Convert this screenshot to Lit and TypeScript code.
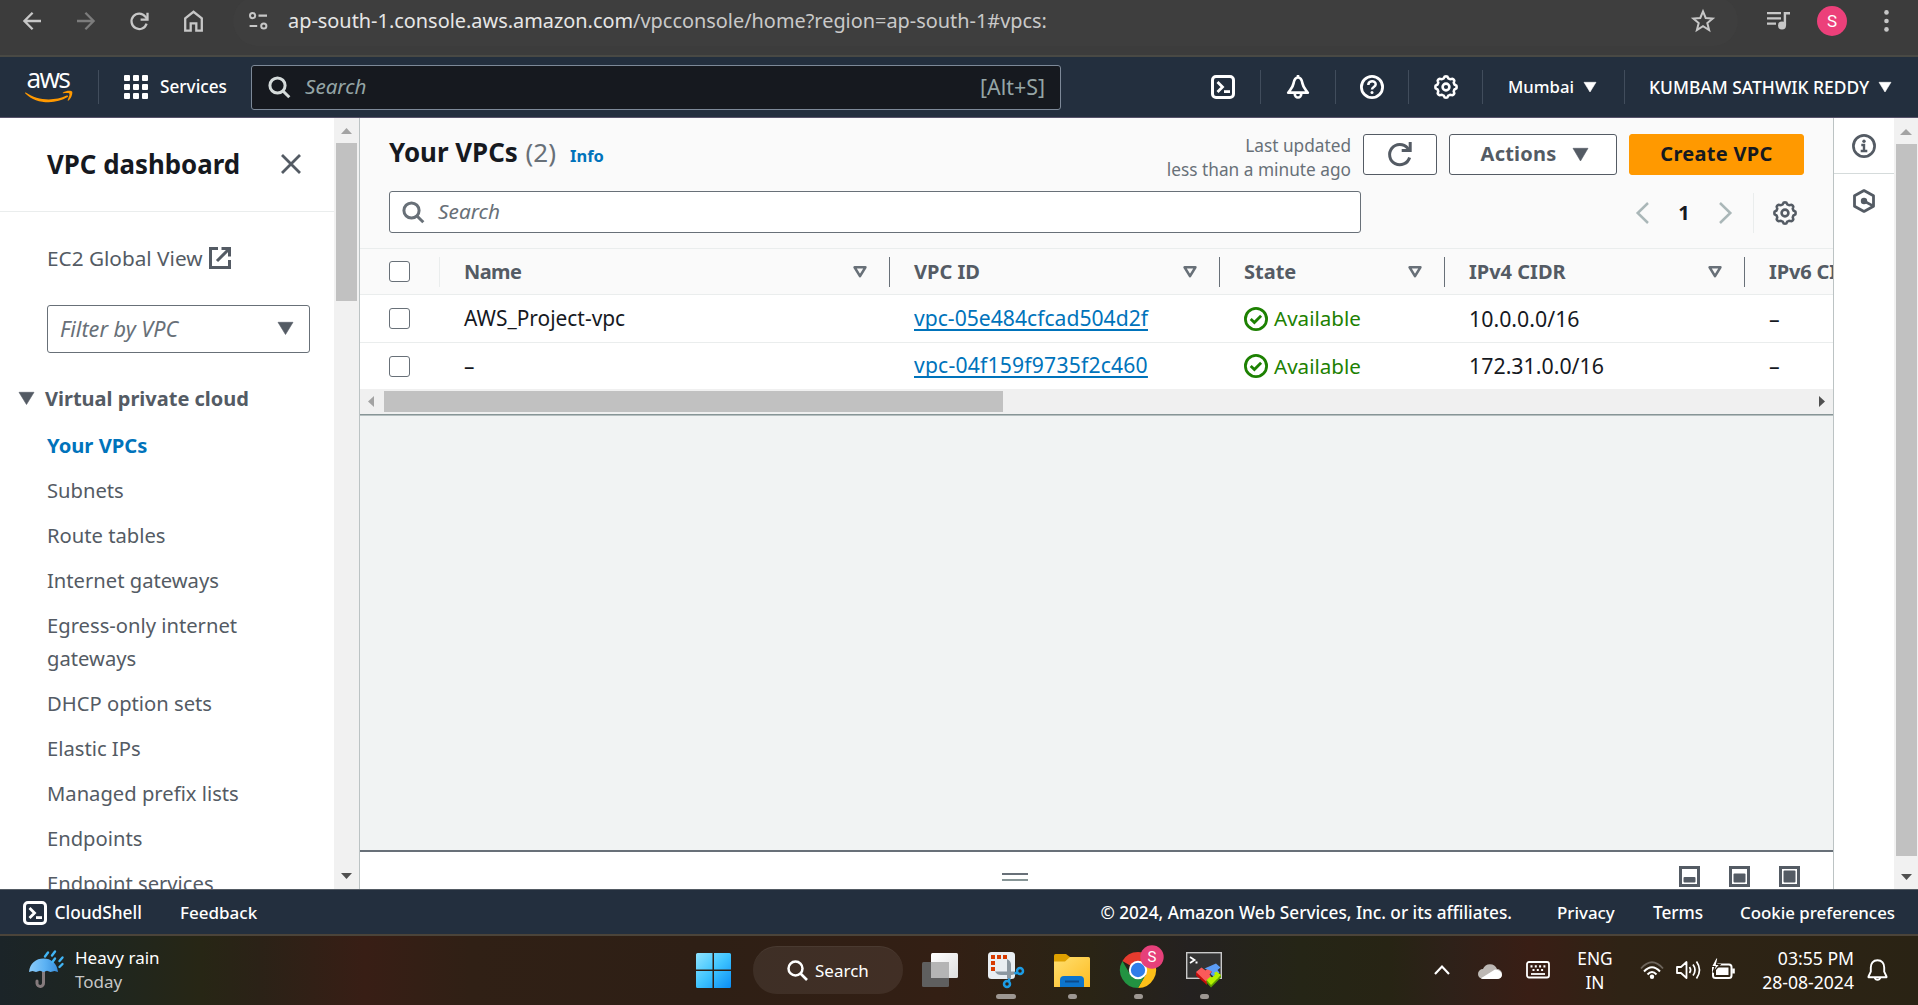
import { LitElement, html, css, svg } from "lit";
import { customElement } from "lit/decorators.js";

const gearPath = (() => {
  const pts: string[] = [];
  for (let i = 0; i < 96; i++) {
    const a = (i / 96) * Math.PI * 2;
    const r = 9.7 + 0.95 * Math.tanh(2.2 * Math.cos(8 * a));
    pts.push(`${(12 + r * Math.cos(a)).toFixed(2)} ${(12 + r * Math.sin(a)).toFixed(2)}`);
  }
  return `M${pts.join("L")}Z`;
})();

const icon = (cls: string, w: number, h: number, body: unknown) =>
  html`<svg class="ic ${cls}" width=${w} height=${h} viewBox="0 0 ${w} ${h}" aria-hidden="true">${body}</svg>`;

const gear = (cls = "") =>
  icon(`ln ${cls}`, 24, 24, svg`<path d=${gearPath} stroke-width="2.5"/><circle cx="12" cy="12" r="3.4" stroke-width="2.6"/>`);
const terminal = (cls = "") =>
  icon(`ln ${cls}`, 24, 24, svg`<rect x="1.5" y="1.5" width="21" height="21" rx="3.5" stroke-width="3"/><path d="M6.5 7l5 5-5 5" stroke-width="2.8"/><path d="M13 16.6h6" stroke-width="2.8"/>`);
const magnifier = (cls = "") =>
  icon(`ln ${cls}`, 23, 23, svg`<circle cx="9.5" cy="9.5" r="7.6" stroke-width="3"/><path d="M15 15l6.3 6.3" stroke-width="3"/>`);
const caret = (w: number, h: number, cls = "") =>
  icon(`fl ${cls}`, w, h, svg`<path d=${`M0 0.3H${w}L${w / 2} ${h}Z`} stroke="currentColor" stroke-width="0.6" stroke-linejoin="round"/>`);
const sortIcon = icon("ln sort", 16, 14, svg`<path d="M2.6 2.3h10.8L8 11.2Z" stroke-width="2.6" stroke-linejoin="round"/>`);

const shared = css`
  :host { display: block; box-sizing: border-box; }
  * { box-sizing: border-box; }
  .ic { display: block; flex: none; overflow: visible; }
  .ln { fill: none; stroke: currentColor; }
  .fl { fill: currentColor; }
  span { white-space: nowrap; }
`;

@customElement("browser-bar")
class BrowserBar extends LitElement {
  static styles = [shared, css`
    :host { height: 57px; background: #3c3c3c; border-bottom: 2px solid #494944; color: #c7c7c7; }
    .bar { display: flex; align-items: center; height: 42px; }
    .back { margin-left: 23px; }
    .fwd { margin-left: 36px; color: #7c7c7c; }
    .reload { margin-left: 35px; }
    .home { margin-left: 35px; }
    .omni { display: flex; align-items: center; width: 1505px; height: 50px; margin: 0 0 -4px 30px; padding: 0 0 1px 16px; background: #3e3e3e; border-radius: 25px; align-self: flex-end; }
    .url { margin-left: 20px; font-size: 19.9px; color: #c9c9c9; padding-bottom: 1px; }
    .host { color: #e6e6e6; }
    .star { margin-left: auto; margin-right: 23px; }
    .queue { margin-left: 29px; }
    .avatar { display: flex; align-items: center; justify-content: center; width: 30px; height: 30px; margin-left: 27px; border-radius: 50%; background: #ec407a; color: #fff; font: 17px Roboto, sans-serif; }
    .dots { margin-left: 37px; }
  `];
  render() {
    return html`<div class="bar">
      ${icon("ln back", 18, 18, svg`<path d="M18 9H1.8M9.6 .8L1.4 9l8.2 8.2" stroke-width="2.3"/>`)}
      ${icon("ln fwd", 18, 18, svg`<path d="M0 9h16.2M8.4 .8L16.6 9l-8.2 8.2" stroke-width="2.3"/>`)}
      ${icon("ln reload", 19, 19, svg`<path d="M16.6 11.6A7.7 7.7 0 1 1 15.3 4.6L17 6.8" stroke-width="2.3"/><path d="M17.5 .8v6.9h-6.9" stroke-width="2.3"/>`)}
      ${icon("ln home", 19, 22, svg`<path d="M1.2 8.4L9.5 1.8l8.3 6.6v12.3h-5.5v-7.3H6.7v7.3H1.2Z" stroke-width="2.3"/>`)}
      <div class="omni">
        ${icon("ln", 19, 18, svg`<circle cx="3.6" cy="3.6" r="2.6" stroke-width="2"/><path d="M9.5 3.6H18M.6 14h7.6" stroke-width="2.2"/><circle cx="14.8" cy="14" r="2.6" stroke-width="2"/>`)}
        <span class="url"><span class="host">ap-south-1.console.aws.amazon.com</span>/vpcconsole/home?region=ap-south-1#vpcs:</span>
        ${icon("ln star", 24, 23, svg`<path d="M12 2.4l2.7 6.6 7 .5-5.4 4.6 1.8 6.9L12 17.2 5.9 21l1.8-6.9L2.3 9.5l7-.5Z" stroke-width="2"/>`)}
      </div>
      ${icon("queue", 23, 20, svg`<path d="M0 2.2h14M0 7.4h14M0 12.6h9" stroke="currentColor" stroke-width="2.3"/><circle cx="15" cy="14.4" r="4" fill="currentColor"/><path d="M17.9 14.4V2.3H23" fill="none" stroke="currentColor" stroke-width="2.4"/>`)}
      <div class="avatar">S</div>
      ${icon("fl dots", 5, 22, svg`<circle cx="2.5" cy="2.4" r="2.3"/><circle cx="2.5" cy="11" r="2.3"/><circle cx="2.5" cy="19.4" r="2.3"/>`)}
    </div>`;
  }
}

@customElement("console-nav")
class ConsoleNav extends LitElement {
  static styles = [shared, css`
    :host { height: 61px; background: #232f3e; border-bottom: 1px solid #57536a; color: #fff; font-weight: 500; font-size: 17.2px; }
    .nav { display: flex; align-items: center; height: 60px; }
    .logo { display: flex; flex-direction: column; width: 48px; margin-left: 25px; height: 44px; }
    .aws { font: 500 26.5px/24px "Open Sans", "Noto Sans", sans-serif; letter-spacing: -1.7px; padding-left: 1.5px; margin-top: 1px; }
    .smile { margin-top: 1px; }
    .sep { width: 1px; height: 34px; background: #414d5c; flex: none; }
    .s1 { margin-left: 25px; }
    .grid { margin-left: 25px; }
    .services, .region, .user { padding-bottom: 1px; }
    .services { margin-left: 12px; width: 67px; }
    .search { display: flex; align-items: center; width: 810px; height: 45px; margin-left: 24px; padding: 0 15px 0 16px; background: #16191f; border: 1.5px solid #7d8998; border-radius: 3px; color: #95a5a6; font-weight: 400; }
    .mag { color: #d5dbdb; }
    .ph { font-size: 20.6px; font-style: italic; margin-left: 14px; padding-bottom: 2px; }
    .key { font-size: 21.4px; margin-left: auto; padding-bottom: 2px; }
    .i1 { margin-left: 150px; } .s2 { margin-left: 25px; }
    .i2 { margin-left: 25px; } .s3 { margin-left: 25px; }
    .i3 { margin-left: 24px; } .s4 { margin-left: 24px; }
    .i4 { margin-left: 25px; } .s5 { margin-left: 24px; }
    .region { margin-left: 25px; width: 66px; font-size: 16.7px; } .c1 { margin-left: 10px; }
    .s6 { margin-left: 28px; }
    .user { margin-left: 24px; width: 221px; font-size: 17.45px; } .c2 { margin-left: 9px; }
  `];
  render() {
    return html`<div class="nav">
      <div class="logo"><span class="aws">aws</span>
        ${icon("smile", 48, 12, svg`<path d="M.8 1.6C12 9.6 29 10.6 41.6 4.6c1.4-.6 2.3.5 1 1.5C30.5 13.8 11 13.2.3 2.4-.2 1.8.2 1.2.8 1.6Z" fill="#ff9900"/><path d="M38 1.4c3-1.9 8.2-2 9.1-.9.8 1.3-.4 6.6-3.6 9.1-.6.4-1 .1-.8-.5.9-2 2.3-5.7 1.6-6.6-.7-.8-4.100-.5-5.900-.3-.7 0-.9-.4-.4-.8Z" fill="#ff9900"/>`)}
      </div>
      <i class="sep s1"></i>
      ${icon("fl grid", 24, 24, svg`${[0, 9, 18].map(y => [0, 9, 18].map(x => svg`<rect x=${x} y=${y} width="6" height="6" rx="1"/>`))}`)}
      <span class="services">Services</span>
      <div class="search">${magnifier("mag")}<span class="ph">Search</span><span class="key">[Alt+S]</span></div>
      ${terminal("i1")}<i class="sep s2"></i>
      ${icon("ln i2", 24, 24, svg`<path d="M12 2.5C9 2.5 8 5.4 7.5 8.5 6.8 12.5 4.8 14 2.2 17.7H21.8C19.2 14 17.2 12.5 16.5 8.5 16 5.4 15 2.5 12 2.5Z" stroke-width="2.7" stroke-linejoin="round"/><path d="M8.7 18.5a3.3 4 0 0 0 6.6 0" stroke-width="2.6"/><path d="M12 0v3" stroke-width="2.6"/>`)}<i class="sep s3"></i>
      ${icon("ln i3", 24, 24, svg`<circle cx="12" cy="12" r="10.6" stroke-width="2.8"/><path d="M8.3 10c0-5 7.4-5 7.4-.7 0 2.7-3.7 2.7-3.7 5.2" stroke-width="2.5"/><circle cx="12" cy="17.5" r="1.5" fill="currentColor" stroke="none"/>`)}<i class="sep s4"></i>
      ${gear("i4")}<i class="sep s5"></i>
      <span class="region">Mumbai</span>${caret(12, 10, "c1")}<i class="sep s6"></i>
      <span class="user">KUMBAM SATHWIK REDDY</span>${caret(12, 10, "c2")}
    </div>`;
  }
}

@customElement("vpc-sidebar")
class VpcSidebar extends LitElement {
  static styles = [shared, css`
    :host { width: 360px; height: 771px; display: flex; border-right: 1px solid #bcc3c4; background: #fff; color: #545b64; overflow: hidden; }
    .body { width: 334px; height: 771px; overflow: hidden; }
    .head { display: flex; align-items: center; justify-content: space-between; height: 94px; padding: 0 33px 2px 47px; border-bottom: 1px solid #eaeded; }
    .title { font-size: 25.85px; font-weight: 700; color: #16191f; }
    .ec2 { display: flex; align-items: center; height: 33px; margin: 29px 0 0 47px; font-size: 20.75px; }
    .ext { margin-left: 7px; }
    .filter { display: flex; align-items: center; justify-content: space-between; width: 263px; height: 48px; margin: 31px 0 0 47px; padding: 0 16px 1px 12px; border: 1.5px solid #687078; border-radius: 3px; color: #687078; font-size: 21.6px; font-style: italic; }
    .dark { color: #545b64; }
    .group { display: flex; align-items: center; height: 33px; margin: 29px 0 0 19px; font-weight: 700; font-size: 20px; }
    .group span { margin-left: 11px; }
    ul { list-style: none; margin: 14px 0 0; padding: 0 60px 0 47px; display: flex; flex-direction: column; gap: 12px; font-size: 20.2px; line-height: 33px; }
    .active { color: #0073bb; font-weight: 700; }
    .scroll { display: flex; flex-direction: column; align-items: center; width: 25px; background: #f1f1f1; padding: 10px 0; }
    .up { color: #a3a3a3; } .down { color: #505050; margin-top: auto; }
    .thumb { width: 21px; height: 158px; margin-top: 9px; background: #c1c1c1; }
  `];
  render() {
    const items = ["Your VPCs", "Subnets", "Route tables", "Internet gateways", "Egress-only internet gateways", "DHCP option sets", "Elastic IPs", "Managed prefix lists", "Endpoints", "Endpoint services"];
    return html`<div class="body">
      <div class="head"><span class="title">VPC dashboard</span>${icon("ln", 20, 20, svg`<path d="M1 1l18 18M19 1L1 19" stroke-width="2.8"/>`)}</div>
      <div class="ec2"><span>EC2 Global View</span>${icon("ln ext", 22, 22, svg`<path d="M9 1.5H1.5v19h19V13" stroke-width="3"/><path d="M12.5 1.5h8v8M20 2L8 14" stroke-width="3"/>`)}</div>
      <div class="filter"><span>Filter by VPC</span>${caret(15, 12.5, "dark")}</div>
      <div class="group">${caret(15, 12.5)}<span>Virtual private cloud</span></div>
      <ul>${items.map((t, i) => html`<li class=${i ? "" : "active"}>${t}</li>`)}</ul>
    </div>
    <div class="scroll">${icon("fl up", 11, 6, svg`<path d="M5.5 0L11 6H0Z"/>`)}<div class="thumb"></div>${icon("fl down", 11, 6, svg`<path d="M0 0h11L5.5 6Z"/>`)}</div>`;
  }
}

@customElement("vpc-table")
class VpcTable extends LitElement {
  static styles = [shared, css`
    :host { width: 1473px; height: 771px; display: flex; flex-direction: column; background: #f1f3f3; overflow: hidden; color: #16191f; }
    .top { display: flex; height: 73px; padding: 16px 29px 0 29px; background: #fafafa; align-items: flex-start; }
    .h { display: flex; align-items: baseline; height: 42px; line-height: 36px; }
    .h1 { font-size: 25.9px; font-weight: 700; width: 136.5px; }
    .n { font-size: 26px; color: #687078; width: 44.5px; }
    .info { font-size: 16.5px; font-weight: 700; color: #0073bb; }
    .upd { margin: 0 12px 0 auto; text-align: right; color: #687078; font-size: 17.25px; line-height: 24px; }
    .upd span { display: block; }
    .btn { display: flex; align-items: center; justify-content: center; height: 41px; border: 1.5px solid #545b64; border-radius: 3px; background: #fff; color: #545b64; font-weight: 700; font-size: 20px; }
    .btn span { padding-bottom: 2px; }
    .r { width: 74px; padding-right: 1px; } .a { width: 168px; margin-left: 12px; padding-left: 3px; gap: 17px; }
    .c { width: 175px; margin-left: 12px; background: #f90; border-color: #f90; color: #16191f; letter-spacing: .3px; }
    .a span { letter-spacing: .2px; }
    .tools { display: flex; height: 57px; padding-left: 29px; background: #fafafa; }
    .search { display: flex; align-items: center; width: 972px; height: 42px; padding-left: 12px; border: 1.5px solid #687078; border-radius: 3px; background: #fff; color: #687078; font-size: 20.8px; font-style: italic; }
    .search span { margin: 0 0 2px 13px; }
    .pager { display: flex; align-items: center; height: 43px; margin-left: 275px; }
    .pg { color: #aab7b8; }
    .one { font-weight: 700; font-size: 20px; width: 70px; text-align: center; }
    .psep { width: 1px; height: 40px; background: #eaeded; margin: 0 19px 0 21px; }
    .gear { color: #545b64; }
    .row { display: grid; grid-template-columns: 80px 450px 330px 225px 300px 88px; align-items: center; height: 47px; background: #fff; border-top: 1px solid #eaeded; overflow: hidden; }
    .head { height: 47px; background: #fafafa; border-bottom: 1px solid #eaeded; color: #545b64; font-weight: 700; font-size: 20px; }
    .first { border-top: 0; }
    .cell { display: flex; align-items: center; padding-left: 24px; height: 30px; overflow: hidden; }
    .cell > span { padding-bottom: 1px; }
    .cell > a { padding-bottom: 3px; }
    .row.head span { padding-bottom: 0; }
    .head .cell { padding-right: 21px; justify-content: space-between; border-right: 1px solid #687078; }
    .head .ck { padding-left: 29px; border-right-color: #eaeded; }
    .head .last { border-right: 0; padding-right: 0; letter-spacing: -.15px; }
    .sort { color: #687078; }
    .ck { padding-left: 29px; }
    .box { width: 21px; height: 21px; border: 1.5px solid #687078; border-radius: 3px; background: #fff; }
    .tight { letter-spacing: -.6px; }
    .name { font-size: 20.9px; } .num { font-size: 21.35px; }
    a { color: #0073bb; font-size: 21.13px; text-decoration: underline; text-decoration-thickness: 2px; text-underline-offset: 3px; text-decoration-skip-ink: none; line-height: 27px; }
    .wide { letter-spacing: .2px; }
    .ok { color: #1d8102; font-size: 20.6px; gap: 6px; }
    .hs { display: flex; align-items: center; height: 25px; padding: 0 8px; background: #f0f0f0; }
    .ht { width: 619px; height: 21px; margin-left: 10px; background: #c1c1c1; }
    .la { color: #a3a3a3; } .ra { color: #505050; margin-left: auto; }
    .edge { height: 2px; background: #879596; border-bottom: 1px solid #b6bfc0; }
    .split { display: flex; margin-top: auto; height: 39px; background: #fff; border-top: 2px solid #687078; color: #545b64; padding: 14px 33px 0 0; justify-content: flex-end; gap: 29px; }
    .grip { width: 26px; height: 8px; margin: 7px auto 0 642px; border-top: 2px solid #687078; border-bottom: 2px solid #879596; }
  `];
  render() {
    const heads = ["Name", "VPC ID", "State", "IPv4 CIDR"];
    const rows = [["AWS_Project-vpc", "vpc-05e484cfcad504d2f", "10.0.0.0/16"], ["–", "vpc-04f159f9735f2c460", "172.31.0.0/16"]];
    const pane = (y: number) => icon("", 21, 21, svg`<rect x="1.5" y="1.5" width="18" height="18" fill="none" stroke="currentColor" stroke-width="3"/><rect x="4.5" y=${y} width="12" height=${16.5 - y} rx="1" fill="currentColor"/>`);
    return html`
      <div class="top">
        <div class="h"><span class="h1">Your VPCs</span><span class="n">(2)</span><span class="info">Info</span></div>
        <div class="upd"><span>Last updated</span><span>less than a minute ago</span></div>
        <div class="btn r">${icon("ln", 25, 25, svg`<path d="M22.6 15.5A10.2 10.2 0 1 1 20.6 6L23 8.7" stroke-width="3"/><path d="M23.2 0v8.5h-8.5" stroke-width="3"/>`)}</div>
        <div class="btn a"><span>Actions</span>${caret(15, 13)}</div>
        <div class="btn c"><span>Create VPC</span></div>
      </div>
      <div class="tools">
        <div class="search">${magnifier()}<span>Search</span></div>
        <div class="pager">
          ${icon("ln pg", 13, 22, svg`<path d="M12 1L1.7 11 12 21" stroke-width="2.5"/>`)}
          <span class="one">1</span>
          ${icon("ln pg", 13, 22, svg`<path d="M1 1l10.3 10L1 21" stroke-width="2.5"/>`)}
          <i class="psep"></i>${gear("gear")}
        </div>
      </div>
      <div class="row head">
        <div class="cell ck"><i class="box"></i></div>
        ${heads.map((h, i) => html`<div class="cell"><span class=${i ? "" : "tight"}>${h}</span>${sortIcon}</div>`)}
        <div class="cell last"><span>IPv6 CIDR</span></div>
      </div>
      ${rows.map((r, i) => html`<div class="row ${i ? "" : "first"}">
        <div class="cell ck"><i class="box"></i></div>
        <div class="cell name"><span>${r[0]}</span></div>
        <div class="cell"><a class=${i ? "wide" : ""}>${r[1]}</a></div>
        <div class="cell ok">${icon("ln", 24, 24, svg`<circle cx="12" cy="12" r="10.6" stroke-width="2.8"/><path d="M6.7 12l3.7 3.6 6.7-6.9" stroke-width="2.8"/>`)}<span>Available</span></div>
        <div class="cell num"><span>${r[2]}</span></div>
        <div class="cell num"><span>–</span></div>
      </div>`)}
      <div class="hs">${icon("fl la", 6, 11, svg`<path d="M6 0v11L0 5.5Z"/>`)}<div class="ht"></div>${icon("fl ra", 6, 11, svg`<path d="M0 0v11l6-5.5Z"/>`)}</div>
      <div class="edge"></div>
      <div class="split"><i class="grip"></i>${pane(11)}${pane(7.5)}${pane(4.5)}</div>`;
  }
}

@customElement("side-rail")
class SideRail extends LitElement {
  static styles = [shared, css`
    :host { display: flex; flex: 1; height: 771px; border-left: 1px solid #bcc3c4; background: #fff; color: #545b64; }
    .rail { width: 60px; }
    .slot { display: flex; align-items: center; justify-content: center; height: 56px; border-bottom: 1px solid #d5dbdb; }
    .two { height: 54px; border: 0; }
    .scroll { display: flex; flex-direction: column; align-items: center; width: 24px; background: #f1f1f1; padding: 11px 0 9px; }
    .up { color: #a3a3a3; } .down { color: #505050; margin-top: auto; }
    .thumb { width: 21px; height: 712px; margin-top: 9px; background: #c1c1c1; }
  `];
  render() {
    return html`<div class="rail">
      <div class="slot">${icon("ln", 24, 24, svg`<circle cx="12" cy="12" r="10.6" stroke-width="2.7"/><path d="M9.3 11H12v6M8.7 17h6.6" stroke-width="2.4"/><circle cx="12" cy="7.3" r="1.7" fill="currentColor" stroke="none"/>`)}</div>
      <div class="slot two">${icon("ln", 22, 24, svg`<path d="M11 1.6l9.5 5.2v10.4L11 22.4l-9.5-5.2V6.8Z" stroke-width="2.8" stroke-linejoin="round"/><circle cx="11" cy="12" r="3.2" fill="currentColor" stroke="none"/><path d="M11 12l8.5 4.6" stroke-width="2.6"/>`)}</div>
    </div>
    <div class="scroll">${icon("fl up", 12, 6, svg`<path d="M6 0l6 6H0Z"/>`)}<div class="thumb"></div>${icon("fl down", 11, 6, svg`<path d="M0 0h11L5.5 6Z"/>`)}</div>`;
  }
}

@customElement("console-footer")
class ConsoleFooter extends LitElement {
  static styles = [shared, css`
    :host { height: 45px; display: flex; align-items: center; background: #232f3e; border-top: 1px solid #545b64; color: #fff; font-weight: 500; font-size: 17.2px; padding: 1px 23px 0; }
    span { padding-bottom: 1px; }
    .cs { margin-left: 7.5px; width: 88.5px; font-size: 17.3px; } .fb { margin-left: 37px; font-size: 17px; }
    .copy { margin-left: auto; }
    .p { margin-left: 45px; width: 59px; font-size: 16.9px; } .t { margin-left: 37px; width: 50px; } .c { margin-left: 37px; font-size: 16.85px; }
  `];
  render() {
    return html`${terminal()}<span class="cs">CloudShell</span><span class="fb">Feedback</span>
      <span class="copy">© 2024, Amazon Web Services, Inc. or its affiliates.</span><span class="p">Privacy</span><span class="t">Terms</span><span class="c">Cookie preferences</span>`;
  }
}

@customElement("task-bar")
class TaskBar extends LitElement {
  static styles = [shared, css`
    :host { height: 71px; border-top: 2px solid #4b443a; color: #fff; font-size: 17px; line-height: 24px;
      background: linear-gradient(90deg, #1b2428 0, #1f261f 110px, #272615 200px, #2b2217 260px, #381e15 365px, #302015 470px, #2e1f15 700px, #331f14 940px, #2a2415 1090px, #242120 1190px, #252516 1300px, #272414 1390px, #2e2119 1450px, #391e15 1530px, #2f2315 1620px, #2a2314 100%); }
    .bar { display: flex; height: 69px; align-items: flex-start; }
    .bar > * { flex: none; }
    .rain { margin: 14px 0 0 28px; }
    .weather { margin: 10px 0 0 11px; width: 85px; }
    .weather span, .lang span, .clock span { display: block; }
    .dim { color: #c6c6c6; }
    .win { margin: 17px 0 0 536px; }
    .pill { display: flex; align-items: center; width: 150px; height: 48px; margin: 10px 0 0 22px; padding-left: 34px; gap: 7px; border-radius: 24px; background: rgba(255,255,255,.075); border-top: 1px solid rgba(255,255,255,.05); }
    .task { margin: 17px 0 0 18px; }
    .app { display: flex; flex-direction: column; align-items: center; width: 36px; margin: 16px 0 0 30px; }
    .dot { width: 9px; height: 5px; margin-top: 6px; border-radius: 3px; background: #9d9792; }
    .wide { width: 20px; }
    .chev { margin: 29px 0 0 212px; } .cloud { margin: 26px 0 0 28px; } .kb { margin: 25px 0 0 24px; }
    .lang { width: 36px; margin: 11px 0 0 27px; text-align: center; font-size: 17.3px; }
    .wifi { margin: 25px 0 0 27px; } .spk { margin: 24px 0 0 12px; } .bat { margin: 22px 0 0 9px; }
    .clock { width: 94px; margin: 10px 0 0 24px; text-align: right; font-size: 17.6px; }
    .bell { margin: 23px 0 0 13px; }
    .s { font: 15px Roboto, sans-serif; fill: #fff; }
  `];
  render() {
    const blue = "#41b5f5";
    return html`<div class="bar">
      ${icon("rain", 36, 38, svg`
        <defs><linearGradient id="um" x1="0" x2="1"><stop offset="0" stop-color="#8ccbf8"/><stop offset=".55" stop-color="#5cb2f4"/><stop offset="1" stop-color="#3a8fdd"/></linearGradient></defs>
        <path d="M15.5 20v13a3 3 0 0 1-6.5.5V31" fill="none" stroke="#857b7d" stroke-width="3" stroke-linecap="round"/>
        <path d="M1 22C2 13 8 8.5 15.5 8.5S29 13 30 22l-3.500-1-4 1-3.500-1.200L15.500 22 12 20.800 8 22l-3.500-1Z" fill="url(#um)"/>
        <path d="M20 2.5l-3 4M27 1.5l-3 4M27 8.5l-2.500 3.500M34.500 7.500l-3 3.500M34.500 14l-3 3" stroke=${blue} stroke-width="2.4" stroke-linecap="round"/>`)}
      <div class="weather"><span>Heavy rain</span><span class="dim">Today</span></div>
      ${icon("win", 35, 35, svg`<defs><linearGradient id="w" x1="0" y1="0" x2="1" y2="1"><stop offset="0" stop-color="#8fe4ff"/><stop offset=".5" stop-color="#3fc4ff"/><stop offset="1" stop-color="#0a8df5"/></linearGradient></defs>
        <path d="M0 1.5Q0 0 1.5 0H16.5V16.5H0ZM18 0H33.5Q35 0 35 1.5V16.5H18ZM0 18H16.5V35H1.5Q0 35 0 33.5ZM18 18H35V33.5Q35 35 33.5 35H18Z" fill="url(#w)"/>`)}
      <div class="pill">${icon("ln", 21, 21, svg`<circle cx="8.5" cy="8.5" r="7" stroke-width="2.5"/><path d="M13.5 13.5l6.5 6.5" stroke-width="2.6"/>`)}<span>Search</span></div>
      ${icon("task", 37, 35, svg`<defs><linearGradient id="tv" x1="0" y1="0" x2="1" y2="1"><stop offset="0" stop-color="#fff"/><stop offset="1" stop-color="#dedede"/></linearGradient></defs><rect x="10" y="0" width="27" height="25" rx="1.5" fill="url(#tv)"/><rect x="1" y="9" width="27" height="25" rx="1.5" fill="#5f5f5f"/><path d="M10 9h18v16H10Z" fill="#b5b5b5"/>`)}
      <div class="app">${icon("", 36, 36, svg`
        <rect x="0" y="0" width="27" height="27" rx="3.5" fill="#e9eef2"/>
        <path d="M3 3h4v4H3ZM9 3h4v4H9ZM15 3h4v4h-4ZM3 9h4v4H3ZM3 15h4v4H3Z" fill="#d83b01"/>
        <path d="M7 19.5H27v2.5l-3 1H13Q9 23 7 19.5ZM19 7q3.5 1.5 4 5v14l-2 1.500-2-1Z" fill="#8c98a1"/>
        <circle cx="32" cy="19" r="3" fill="none" stroke="#1c9ce5" stroke-width="2.5"/><circle cx="19" cy="32" r="3" fill="none" stroke="#1c9ce5" stroke-width="2.5"/><path d="M26.5 21.5l3-.8M21.5 26.5l-.8 3" stroke="#1c9ce5" stroke-width="2.6"/>`)}<i class="dot wide"></i></div>
      <div class="app">${icon("", 36, 36, svg`
        <defs><linearGradient id="fo" x1="0" y1="0" x2="1" y2="1"><stop offset="0" stop-color="#ffdf70"/><stop offset="1" stop-color="#fdbc22"/></linearGradient></defs>
        <path d="M0 10V3.5Q0 2 1.5 2H12l4 3v5Z" fill="#dea000"/><path d="M0 9.5h11l5-4.5H34.5Q36 5 36 6.5V35H0Z" fill="url(#fo)"/>
        <path d="M6 35V28q0-4 4-4H26q4 0 4 4v7Z" fill="#0c74cc"/><path d="M11 29.5H25" stroke="#0a4a8c" stroke-width="2"/>`)}<i class="dot"></i></div>
      <div class="app">${icon("", 36, 36, svg`
        <path d="M18 18L2.4 9A18 18 0 0 1 33.6 9Z" fill="#e53b2e"/><path d="M18 18V9H33.6A18 18 0 0 1 18 36l7.8-13.5Z" fill="#fcbf18"/><path d="M2.4 9A18 18 0 0 0 18 36l7.8-13.5L10.2 22.5Z" fill="#229342"/>
        <circle cx="18" cy="18" r="9.2" fill="#fff"/><circle cx="18" cy="18" r="7.2" fill="#2f7de9"/>
        <circle cx="32" cy="5" r="11.7" fill="#e6407a"/><text class="s" x="32" y="10.3" text-anchor="middle">S</text>`)}<i class="dot"></i></div>
      <div class="app">${icon("", 36, 36, svg`
        <rect x=".7" y=".7" width="34.6" height="25.6" fill="#333" stroke="#c9c9c9" stroke-width="1.4"/><path d="M4 5l4.5 3L4 11" fill="none" stroke="#fff" stroke-width="1.8"/><path d="M9.5 10.5h2" stroke="#fff" stroke-width="2"/>
        <path d="M10 20v3.5l11 9.5v-4Z" fill="#c60b0b"/><path d="M10 20l5.5-4.5 4 3 2.5-2.5 4 3.5-2.500 3 1.500 2L20 29.500Z" fill="#fb5a5a"/>
        <path d="M18.5 16.5L30 11.5l4.500 4-3 2.500 2 2.500-6 4-3-2.500 1.500-2.500-3-1.500Z" fill="#5c9cf5"/>
        <path d="M20.5 28v2.5L25 35.5 35 25.5v-2.500L25 32Z" fill="#5d9d00"/><path d="M20.500 28l4-3.500 1.500 1 3-3-1-1.500 2.500-1.500 4.500 3.500L25 33Z" fill="#b4f000"/>`)}<i class="dot"></i></div>
      ${icon("ln chev", 16, 10, svg`<path d="M1 9l7-7.5L15 9" stroke-width="2.2"/>`)}
      ${icon("cloud", 24, 17, svg`<path d="M5 17a5 5 0 0 1 0-10 7.5 7.5 0 0 1 14 0 5 5 0 0 1 0 10Z" fill="#bdb8b4"/><path d="M3 16.2L17 7.5q6.5.5 7 5.5-.5 4-5 4H5q-1.200 0-2-.8Z" fill="#fff"/>`)}
      ${icon("kb", 24, 18, svg`<rect x="1" y="1" width="22" height="15.5" rx="2" fill="none" stroke="#fff" stroke-width="1.8"/><path d="M4.5 5.3h15" stroke="#fff" stroke-width="2.2" stroke-dasharray="2 2.3"/><path d="M6.5 9h12" stroke="#fff" stroke-width="2.2" stroke-dasharray="2 2.3"/><path d="M5 13h14" stroke="#fff" stroke-width="1.8"/>`)}
      <div class="lang"><span>ENG</span><span>IN</span></div>
      ${icon("ln wifi", 24, 18, svg`<path d="M1 7.5Q12-5 23 7.5" stroke="#6d655c" stroke-width="1.8"/><path d="M4 10.5q8-8.5 16 0M7.5 13.5q4.5-5 9 0" stroke-width="2"/><circle cx="12" cy="15.7" r="2.2" fill="#fff" stroke="none"/>`)}
      ${icon("ln spk", 25, 20, svg`<path d="M1 7h4l5.5-5v16L5 13H1Z" stroke-width="1.8" stroke-linejoin="round"/><path d="M13.5 7q2.2 3 0 6M17 4.5q4 5.5 0 11M20.5 1.5q6 8.5 0 17" stroke-width="1.7"/>`)}
      ${icon("bat", 26, 22, svg`<rect x="3" y="6.5" width="18.5" height="13.5" rx="2.5" fill="none" stroke="#fff" stroke-width="2"/><path d="M23.5 10.5v5" stroke="#fff" stroke-width="2.6"/><path d="M6 9.5h12.5v7.5H6Z" fill="#fff"/><path d="M6 0L1.5 8.5H5L3 14.5 10 6.5H6.5L8 0Z" fill="#fff" stroke="#2d2315" stroke-width="1.2"/>`)}
      <div class="clock"><span>03:55 PM</span><span>28-08-2024</span></div>
      ${icon("ln bell", 21, 23, svg`<path d="M10.5 1.2C6 1.2 3.8 4.5 3.8 8.5v4.2L1.5 17.5v.8h18v-.8l-2.300-4.800V8.500c0-4-2.200-7.300-6.700-7.300Z" stroke-width="1.9" stroke-linejoin="round"/><path d="M7.7 18.5a2.9 3 0 0 0 5.6 0" stroke-width="1.9"/>`)}
    </div>`;
  }
}

@customElement("app-root")
class AppRoot extends LitElement {
  static styles = css`
    :host { display: flex; flex-direction: column; width: 1918px; height: 1005px; overflow: hidden; background: #fff; font-family: "Noto Sans", "Open Sans", sans-serif; }
    .main { display: flex; height: 771px; }
  `;
  render() {
    return html`<browser-bar></browser-bar><console-nav></console-nav>
      <div class="main"><vpc-sidebar></vpc-sidebar><vpc-table></vpc-table><side-rail></side-rail></div>
      <console-footer></console-footer><task-bar></task-bar>`;
  }
}
